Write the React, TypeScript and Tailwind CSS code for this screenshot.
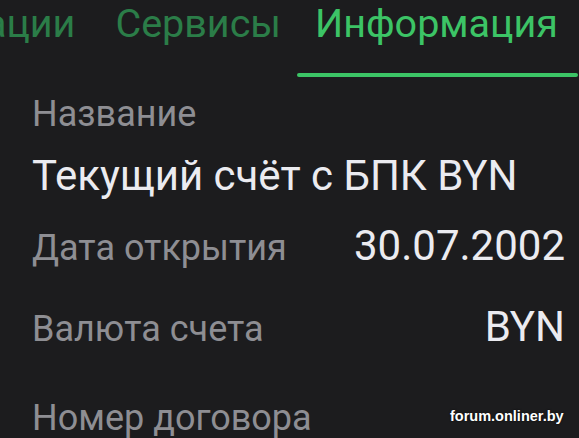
import React from "react";

export default function App() {
  return (
    <div
      className="relative w-[579px] h-[438px] overflow-hidden bg-[#1c1c1e]"
      style={{ fontFamily: "Roboto, 'Noto Sans', sans-serif" }}
    >
      <div className="flex justify-end overflow-hidden w-[579px]">
        <div className="shrink-0 flex flex-col pl-[20px] pr-[20px]">
          <div className="pt-[4px] pb-[29px] text-[39.5px] leading-none text-[#2b7d48]">Операции</div>
          <div className="h-[4px]" />
        </div>
        <div className="shrink-0 flex flex-col pl-[20px] pr-[16px]">
          <div className="pt-[4px] pb-[29px] text-[39.5px] leading-none text-[#2b7d48]">Сервисы</div>
          <div className="h-[4px]" />
        </div>
        <div className="shrink-0 flex flex-col mr-[1px]">
          <div className="pl-[18px] pr-[20px] pt-[4px] pb-[29px] text-[39.5px] leading-none text-[#3cc466]">Информация</div>
          <div className="h-[4px] rounded-full bg-[#3cc466]" />
        </div>
      </div>

      <div className="flex flex-col pl-[32px] pr-[14px]">
        <div className="mt-[19px] text-[36px] leading-none text-[#8e8e93]">Название</div>
        <div className="mt-[23px] text-[42px] leading-none text-[#ebebf0]">Текущий счёт с БПК BYN</div>
        <div className="mt-[28px] flex items-baseline justify-between">
          <span className="text-[36px] leading-none text-[#8e8e93]">Дата открытия</span>
          <span className="text-[42px] leading-none text-[#ebebf0]">30.07.2002</span>
        </div>
        <div className="mt-[39px] flex items-baseline justify-between">
          <span className="text-[36px] leading-none text-[#8e8e93]">Валюта счета</span>
          <span className="text-[42px] leading-none text-[#ebebf0]">BYN</span>
        </div>
        <div className="mt-[52px] text-[36px] leading-none text-[#8e8e93]">Номер договора</div>
      </div>

      <div
        className="absolute left-[450px] top-[409px] text-[14.5px] font-bold text-white leading-none"
        style={{ fontFamily: "'Liberation Sans', Arial, sans-serif", textShadow: "0 0 2px rgba(0,0,0,0.8)" }}
      >
        forum.onliner.by
      </div>
    </div>
  );
}
